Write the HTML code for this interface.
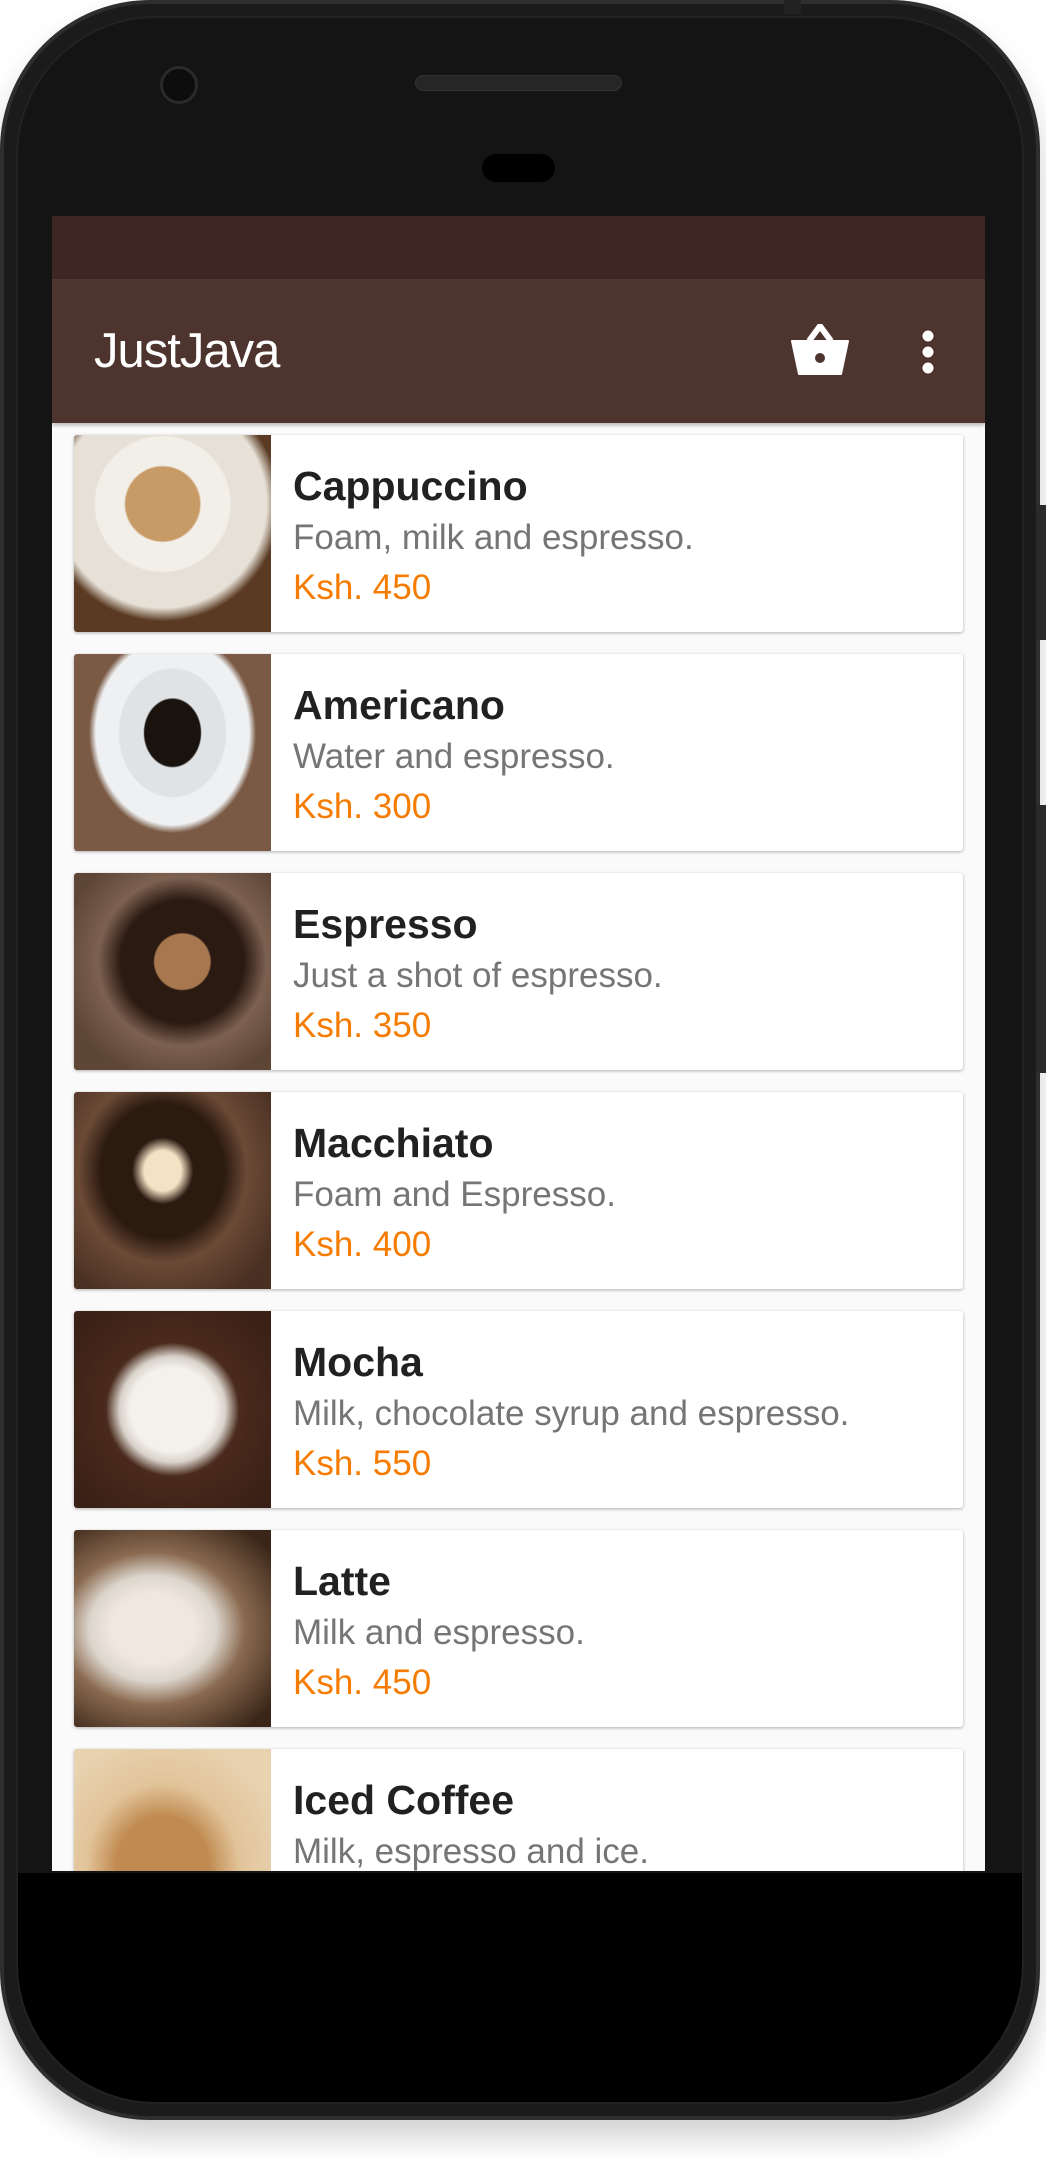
<!DOCTYPE html>
<html><head><meta charset="utf-8"><style>
*{margin:0;padding:0;box-sizing:border-box}
body{width:1046px;height:2158px;background:#fff;position:relative;overflow:hidden;font-family:"Liberation Sans",sans-serif}
.phone{position:absolute;left:0;top:0;width:1040px;height:2120px;background:#1b1b1b;border-radius:150px;border:4px solid #2e2e2e;box-shadow:0 18px 30px rgba(0,0,0,.18)}
.inner{position:absolute;left:12px;top:12px;right:12px;bottom:12px;border-radius:140px;background:linear-gradient(#141414 0 1855px,#000 1855px);border:2px solid #222}
.screen{position:absolute;left:52px;top:216px;width:933px;height:1655px;background:#fafafa;overflow:hidden}
.status{height:63px;background:#3e2723}
.bar{height:144px;background:#4e342e;position:relative;box-shadow:0 2px 4px rgba(0,0,0,.3)}
.title{position:absolute;left:42px;top:44px;color:#fff;font-size:49px;letter-spacing:-1px}
.card{position:absolute;left:22px;width:889px;height:197px;background:#fff;border-radius:3px;box-shadow:0 1px 3px rgba(0,0,0,.3);overflow:hidden}
.img{position:absolute;left:0;top:0;width:197px;height:197px}
.n{position:absolute;left:219px;top:28px;font-size:41px;font-weight:bold;color:#212121}
.d{position:absolute;left:219px;top:83px;font-size:35px;color:#757575}
.p{position:absolute;left:219px;top:133px;font-size:35px;color:#f57c00}
</style></head><body>
<div class="phone"><div class="inner"></div></div>
<div style="position:absolute;left:784px;top:0;width:17px;height:14px;background:#222"></div>
<div style="position:absolute;left:1036px;top:505px;width:10px;height:135px;background:#2a2a2a"></div>
<div style="position:absolute;left:1036px;top:805px;width:10px;height:268px;background:#2a2a2a"></div>
<div style="position:absolute;left:415px;top:75px;width:207px;height:16px;border-radius:8px;background:#262626;border:1px solid #333"></div>
<div style="position:absolute;left:160px;top:66px;width:38px;height:38px;border-radius:50%;background:#0d0d0d;border:3px solid #2a2a2a"></div>
<div style="position:absolute;left:482px;top:154px;width:73px;height:28px;border-radius:14px;background:#000"></div>
<div class="screen">
<div class="status"></div>
<div class="bar"><div class="title">JustJava</div>
<svg style="position:absolute;left:739px;top:45px" width="58" height="52" viewBox="0 0 58 52"><path d="M18 17 L29 2 L40 17" stroke="#fff" stroke-width="6" fill="none" stroke-linejoin="round"/><path d="M1 17 H57 L50 50 H8 Z" fill="#fff" stroke="#fff" stroke-width="2" stroke-linejoin="round"/><circle cx="29" cy="34" r="5" fill="#4e342e"/></svg>
<svg style="position:absolute;left:866px;top:47px" width="20" height="50"><circle cx="10" cy="10" r="5.5" fill="#fff"/><circle cx="10" cy="26" r="5.5" fill="#fff"/><circle cx="10" cy="42" r="5.5" fill="#fff"/></svg>
</div>
<div class="card" style="top:219px"><div class="img" style="background:radial-gradient(circle at 45% 35%,#c89a66 0 22%,#f2efe9 23% 40%,#e6e0d6 41% 62%,#5a3a22 70%)"></div><div class="n">Cappuccino</div><div class="d">Foam, milk and espresso.</div><div class="p">Ksh. 450</div></div>
<div class="card" style="top:438px"><div class="img" style="background:radial-gradient(ellipse at 50% 40%,#1a120c 0 20%,#dfe3e6 21% 38%,#eef0f2 39% 55%,#7a5a44 60%)"></div><div class="n">Americano</div><div class="d">Water and espresso.</div><div class="p">Ksh. 300</div></div>
<div class="card" style="top:657px"><div class="img" style="background:radial-gradient(ellipse at 55% 45%,#a8774f 0 18%,#2a1a12 19% 40%,#7c6050 55%,#5e4636 80%)"></div><div class="n">Espresso</div><div class="d">Just a shot of espresso.</div><div class="p">Ksh. 350</div></div>
<div class="card" style="top:876px"><div class="img" style="background:radial-gradient(ellipse at 45% 40%,#f3e2c4 0 12%,#2b1a10 20% 40%,#6b4a36 55%,#4a3022 85%)"></div><div class="n">Macchiato</div><div class="d">Foam and Espresso.</div><div class="p">Ksh. 400</div></div>
<div class="card" style="top:1095px"><div class="img" style="background:radial-gradient(ellipse at 50% 50%,#f4f1ec 0 30%,#d8d2ca 38%,#4a2a1c 48%,#3a2016 90%)"></div><div class="n">Mocha</div><div class="d">Milk, chocolate syrup and espresso.</div><div class="p">Ksh. 550</div></div>
<div class="card" style="top:1314px"><div class="img" style="background:radial-gradient(ellipse at 40% 50%,#f0e8de 0 25%,#dcd5cc 38%,#8a6a50 55%,#3a2618 90%)"></div><div class="n">Latte</div><div class="d">Milk and espresso.</div><div class="p">Ksh. 450</div></div>
<div class="card" style="top:1533px"><div class="img" style="background:radial-gradient(ellipse at 45% 60%,#c08a50 0 30%,#e2c49a 50%,#e8d2b0 80%)"></div><div class="n">Iced Coffee</div><div class="d">Milk, espresso and ice.</div><div class="p">Ksh. 450</div></div>
</div>
</body></html>
